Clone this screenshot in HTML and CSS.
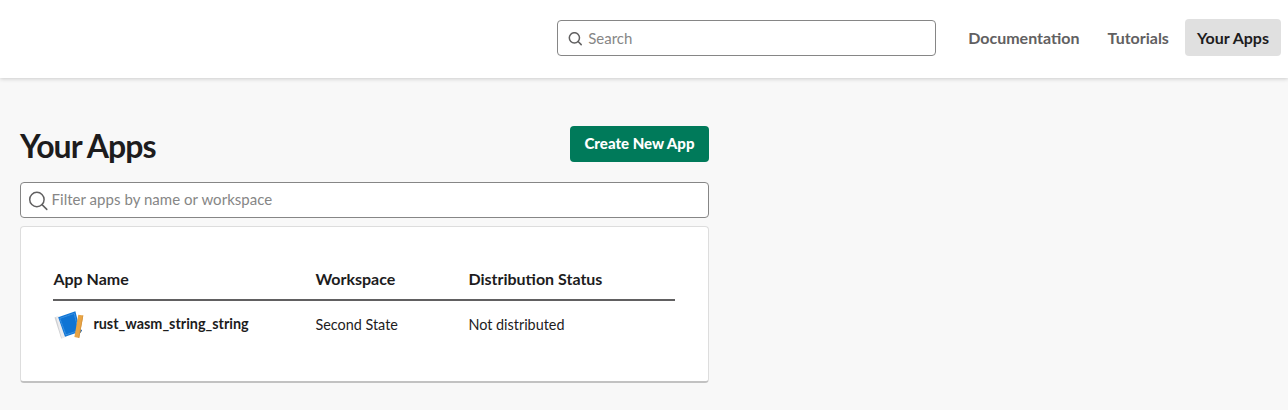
FILE: index.html
```html
<!DOCTYPE html>
<html lang="en">
<head>
<meta charset="utf-8">
<title>Your Apps</title>
<link rel="stylesheet" href="styles.css">
</head>
<body>
<header class="topbar">
  <label class="search">
    <svg class="search-icon" viewBox="0 0 14 14"><circle cx="6.4" cy="5.8" r="5.1"/><path d="M10.1 9.5 13.2 12.6"/></svg>
    <input class="field" type="text" placeholder="Search">
  </label>
  <nav class="nav">
    <a class="nav-link">Documentation</a>
    <a class="nav-link">Tutorials</a>
    <a class="nav-link active">Your Apps</a>
  </nav>
</header>
<main class="content">
  <div class="heading">
    <h1 class="title">Your Apps</h1>
    <button class="create">Create New App</button>
  </div>
  <label class="filter">
    <svg class="filter-icon" viewBox="0 0 20 20"><circle cx="8.9" cy="8.5" r="7.2"/><path d="M14 13.6 18.8 18.4"/></svg>
    <input class="field" type="text" placeholder="Filter apps by name or workspace">
  </label>
  <section class="card">
    <div class="row head"><span>App Name</span><span>Workspace</span><span>Distribution Status</span></div>
    <div class="row item">
      <span class="app">
        <svg class="app-icon" viewBox="0 0 32 32">
          <path fill="#cfd0d3" d="M1.5 8.6 4.5 7.5 11 28.5 8.2 29.6z"/>
          <path fill="#ececee" d="M3 8 5.5 7 14 27.6 8.8 29.4z"/>
          <path fill="#0b56a5" d="M24 16 29 21.5 27.4 24 22 25z"/>
          <path fill="#0f74d4" d="M5.2 8.2 22.4 2.3 27.4 22.4 12 27.8z"/>
          <path fill="none" stroke="#5aa8ec" stroke-width=".6" stroke-dasharray="2 1" d="M6.8 9.4 21.2 4.4 25.4 21.6 12.9 25.9z"/>
          <path fill="#e9a545" d="M25.3 5.7 30.3 6.6 26.2 29 21.4 28.1z"/>
          <path fill="#d4933f" d="M29.5 6.4 30.3 6.6 26.2 29 25.4 28.8z"/>
        </svg>
        <b class="app-name">rust_wasm_string_string</b>
      </span>
      <span>Second State</span><span>Not distributed</span>
    </div>
  </section>
</main>
</body>
</html>
```
FILE: styles.css
```css
* { box-sizing: border-box; }
body { margin: 0; min-height: 410px; background: #f8f8f8; color: #1d1c1d; font-family: Lato, sans-serif; font-size: 15px; }
svg { flex: none; fill: none; stroke: #616061; stroke-width: 1.5; stroke-linecap: round; }
.topbar { display: flex; justify-content: flex-end; align-items: flex-start; height: 78px; padding: 19px 7px 0 0; background: #fff; box-shadow: 0 1px 4px rgba(0,0,0,.18); }
.search { display: flex; align-items: center; width: 379px; height: 36px; margin: 1px 20px 0 0; padding-left: 10px; gap: 6px; border: 1px solid #868686; border-radius: 4px; background: #fff; }
.search-icon { width: 14px; height: 14px; margin-top: 1px; }
.field { flex: 1; min-width: 0; padding: 0; border: 0; outline: 0; background: none; font: 15px/22px Lato, sans-serif; }
.field::placeholder { color: #868686; opacity: 1; }
.nav { display: flex; gap: 4px; }
.nav-link { padding: 0 12px; border-radius: 4px; color: #616061; font-size: 16px; font-weight: 700; line-height: 37px; }
.active { background: #e0e0e0; color: #1d1c1d; }
.content { width: 689px; margin: 48px 0 0 20px; }
.heading { display: flex; justify-content: space-between; height: 56px; }
.title { margin: 0; font-size: 32px; font-weight: 700; line-height: 40px; letter-spacing: -.95px; }
.create { width: 139px; height: 36px; padding: 0 0 2px; border: 0; border-radius: 4px; background: #007a5a; color: #fff; font: 900 15px/34px Lato, sans-serif; }
.filter { display: flex; align-items: center; height: 36px; padding-left: 7px; gap: 3.5px; border: 1px solid #868686; border-radius: 4px; background: #fff; }
.filter .field { padding-bottom: 2px; letter-spacing: .04px; }
.filter-icon { width: 20px; height: 20px; margin-top: 2px; }
.card { height: 157px; margin-top: 8px; padding: 40px 32.6px 0 32px; border: 1px solid #ddd; border-bottom: 2px solid #c2c2c2; border-radius: 4px; background: #fff; }
.row { display: grid; grid-template-columns: 262px 153px 1fr; align-items: center; padding-left: .4px; }
.head { height: 34px; padding-bottom: 10px; border-bottom: 2px solid #616061; font-size: 16px; font-weight: 700; }
.item { height: 46px; font-size: 14.4px; }
.app { display: flex; align-items: center; gap: 8px; }
.app-icon { width: 32px; height: 32px; margin-top: 2px; stroke: none; }
.app-name { padding-bottom: 2px; }
```
